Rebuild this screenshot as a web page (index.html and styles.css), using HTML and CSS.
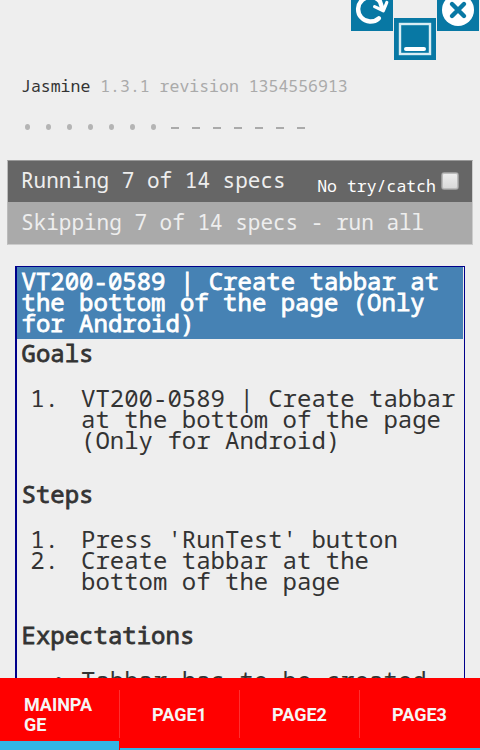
FILE: index.html
```html
<!DOCTYPE html>
<html lang="en">
<head>
<meta charset="utf-8">
<title>Jasmine Spec Runner</title>
<link rel="stylesheet" href="styles.css">
</head>
<body>
<div class="tools">
  <svg class="tool reload" viewBox="0 0 42 42"><rect width="42" height="42" fill="#0878a4"/><path d="M27.8 29.3A12.3 12.3 0 1 1 29 12.5L31.5 20" fill="none" stroke="#fff" stroke-width="4.4" stroke-linecap="round"/><path d="M23.6 17.6L32.3 21.8L35.8 13.5" fill="none" stroke="#fff" stroke-width="3.2" stroke-linecap="round" stroke-linejoin="round"/></svg>
  <svg class="tool minimize" viewBox="0 0 42 42"><rect width="42" height="42" fill="#0878a4"/><rect x="6" y="6" width="30" height="30" fill="none" stroke="#d9edf4" stroke-width="2.4"/><path d="M12 31H30" stroke="#fff" stroke-width="4" stroke-linecap="round"/></svg>
  <svg class="tool close" viewBox="0 0 42 42"><rect width="42" height="42" fill="#0878a4"/><circle cx="21" cy="21" r="16" fill="#fff"/><path d="M15 15L27 27M27 15L15 27" stroke="#0878a4" stroke-width="4.4" stroke-linecap="round"/></svg>
</div>
<main class="reporter">
  <div class="banner"><span class="title">Jasmine</span> <span class="version">1.3.1 revision 1354556913</span></div>
  <ul class="symbols">
    <li class="passed"></li><li class="passed"></li><li class="passed"></li><li class="passed"></li><li class="passed"></li><li class="passed"></li><li class="passed"></li>
    <li class="skipped"></li><li class="skipped"></li><li class="skipped"></li><li class="skipped"></li><li class="skipped"></li><li class="skipped"></li><li class="skipped"></li>
  </ul>
  <div class="alert">
    <div class="bar running"><span>Running 7 of 14 specs</span><label class="exceptions">No try/catch<i class="checkbox"></i></label></div>
    <div class="bar skipping">Skipping 7 of 14 specs - run all</div>
  </div>
  <section class="details">
    <h1>VT200-0589 | Create tabbar at<br>the bottom of the page (Only<br>for Android)</h1>
    <h2>Goals</h2>
    <div class="item"><span class="marker">1.</span><p>VT200-0589 | Create tabbar<br>at the bottom of the page<br>(Only for Android)</p></div>
    <h2>Steps</h2>
    <div class="item"><span class="marker">1.</span><p>Press 'RunTest' button</p></div>
    <div class="item"><span class="marker">2.</span><p>Create tabbar at the<br>bottom of the page</p></div>
    <h2>Expectations</h2>
    <div class="item"><span class="marker bullet">•</span><p>Tabbar has to be created</p></div>
  </section>
</main>
<nav class="tabbar">
  <div class="tab active"><span>MAINPA<br>GE</span></div>
  <div class="tab"><span>PAGE1</span></div>
  <div class="tab"><span>PAGE2</span></div>
  <div class="tab"><span>PAGE3</span></div>
</nav>
</body>
</html>
```
FILE: styles.css
```css
* { box-sizing: border-box; }
body {
  margin: 0;
  height: 750px;
  overflow: hidden;
  display: flex;
  flex-direction: column;
  background: #eee;
  color: #333;
  font-family: "Droid Sans Mono", "Noto Sans Mono", "DejaVu Sans Mono", monospace;
  white-space: nowrap;
}
h1, h2, p, ul { margin: 0; padding: 0; }
.tools { position: absolute; top: 0; right: 0; width: 129px; height: 60px; overflow: hidden; }
.tool { position: absolute; width: 42px; height: 42px; }
.reload { left: 0; top: -11px; }
.minimize { left: 43px; top: 18px; }
.close { left: 86px; top: -11px; }
.reporter { height: 678px; overflow: hidden; padding: 76px 7px 0; }
.banner { font-size: 16.5px; line-height: 20px; padding-left: 14px; }
.version { color: #aaa; }
.symbols { display: flex; list-style: none; height: 20px; margin: 21px 0 23px 14px; }
.symbols li { width: 21px; display: flex; align-items: center; }
.passed::before { content: ""; width: 5px; height: 6px; margin: 0 0 0 4px; border-radius: 50%; background: #b4b4b4; }
.skipped::before { content: ""; width: 8px; height: 2px; margin: 2px 0 0 3px; background: #aaa; }
.alert { border: 1px solid #aaa; height: 85px; width: 466px; border-color: #999 #ccc #ccc #bbb; }
.bar { display: flex; align-items: center; justify-content: space-between; height: 41px; padding: 0 13px 3px 13px; font-size: 21px; color: #eee; }
.running { background: #666; }
.skipping { background: #aaa; height: 42px; }
.exceptions { display: flex; align-items: center; font-size: 16.5px; color: #fff; padding-top: 11px; }
.checkbox { width: 18px; height: 18px; margin: -9px 0 0 5px; border: 1px solid #999; border-radius: 3px; background: linear-gradient(#eee, #d8d8d8); box-shadow: inset 0 0 0 1px #bbb; }
.details { margin: 21px 8px 0; height: 500px; border: 1px solid #00008b; border-left-width: 2px; font-size: 24px; line-height: 21px; }
h1, h2 { font-size: 24px; font-weight: 400; -webkit-text-stroke: 0.8px currentColor; padding-left: 4.5px; }
h1 { height: 72px; padding-top: 3px; margin-right: 1px; background: #4682b4; color: #fff; }
h2 { padding-top: 3px; margin-bottom: 24px; }
.item { display: flex; }
.item + h2 { margin-top: 30px; }
.marker { width: 42px; margin-right: 22px; text-align: right; }
.bullet { width: 49px; margin-right: 15px; }
.tabbar { display: grid; grid-template-columns: repeat(4, 120px); height: 72px; background: #f00; color: #f5f5f5; font: 700 18px/20px Roboto, sans-serif; }
.tab { position: relative; display: flex; align-items: center; justify-content: center; padding: 3px 1px 0 0; border-bottom: 2px solid #33b5e5; }
.tab + .tab::before { content: ""; position: absolute; left: -1px; top: 12px; width: 1px; height: 48px; background: #ff3030; }
.active { border-bottom-width: 9px; padding: 11px 3px 0 0; margin-right: 1px; }
```
